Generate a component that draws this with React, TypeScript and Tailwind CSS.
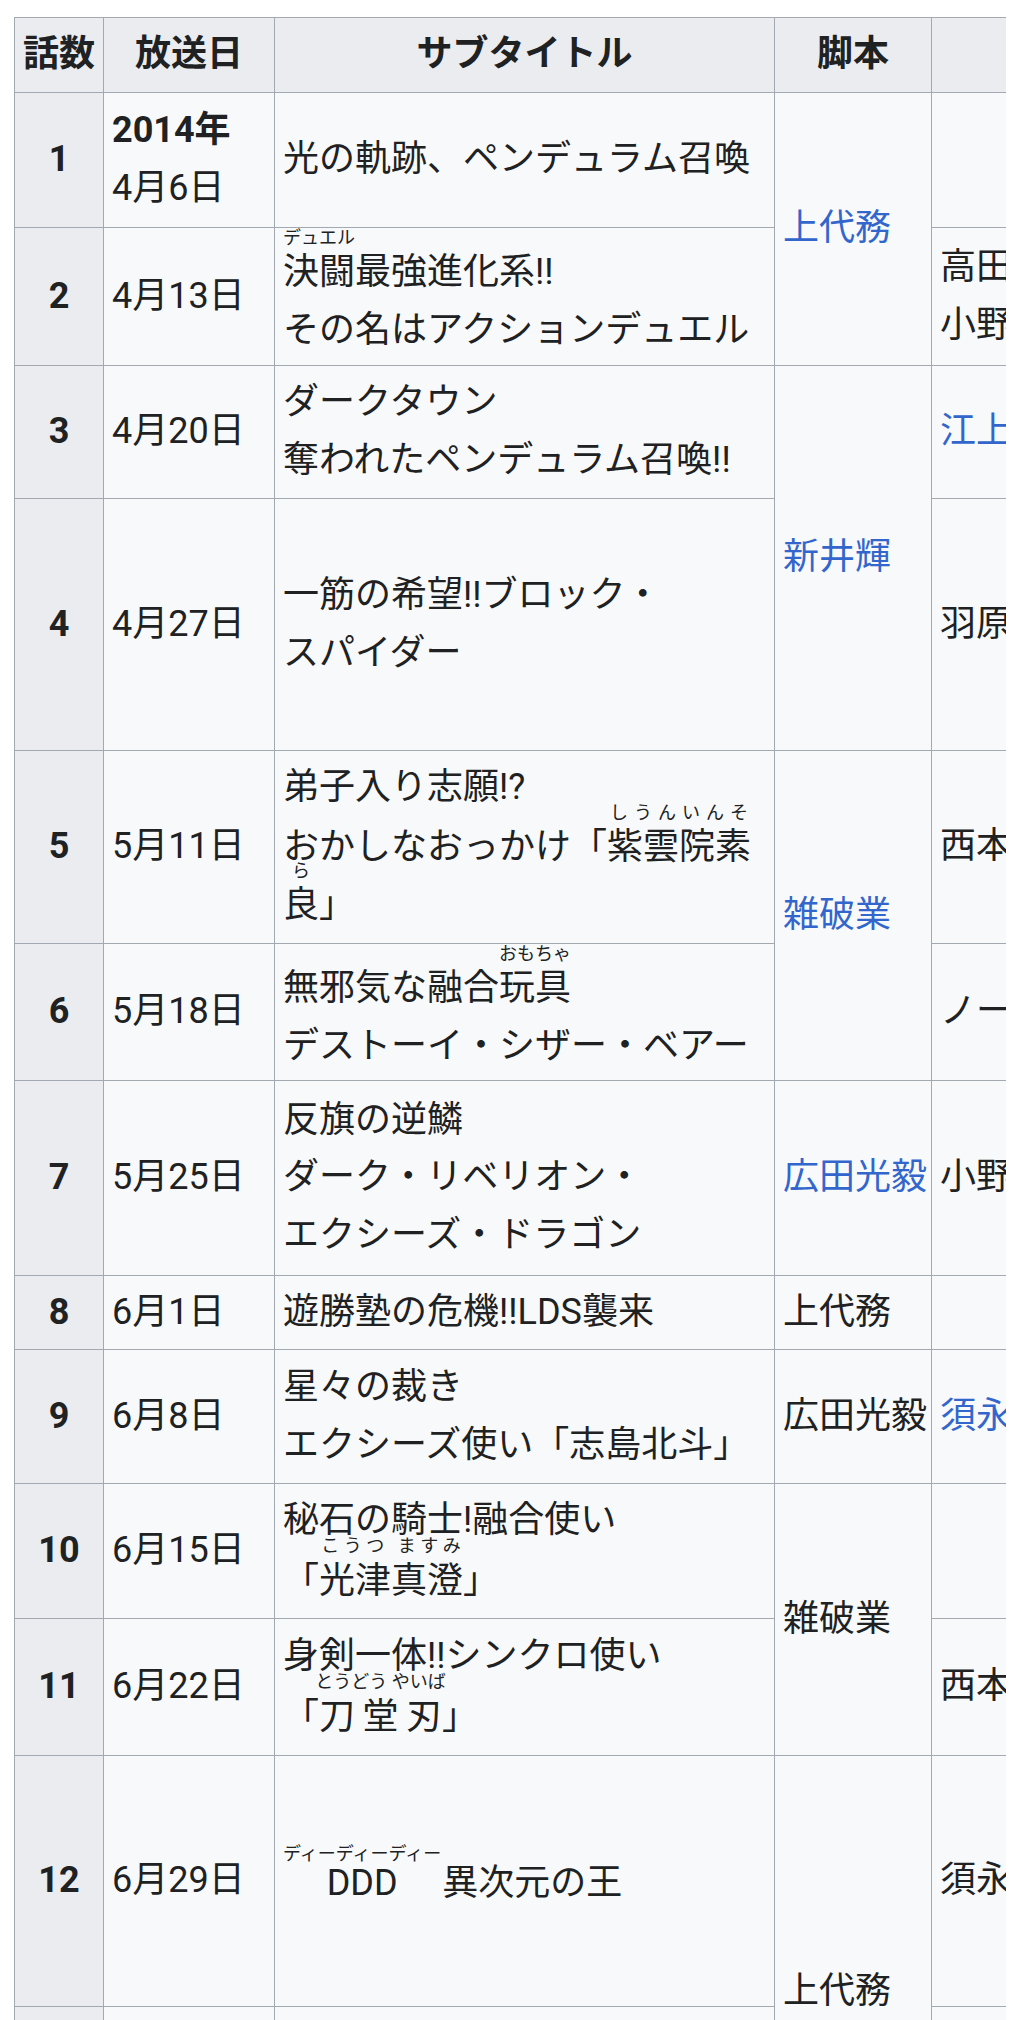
import type { ReactNode } from 'react';

type Row = {
  h: number;
  n: number;
  date: ReactNode;
  title: ReactNode;
  writer?: { text: string; link?: boolean; span?: number };
  staff: ReactNode;
};

// rt keeps a short line box so the ruby does not push the line open
function R({ b, t, className }: { b: string; t: string; className?: string }) {
  return (
    <ruby className={className}>
      {b}
      <rt className="text-[18px] leading-[8px] relative -top-[5px]">{t}</rt>
    </ruby>
  );
}

function A({ children }: { children: ReactNode }) {
  return <a className="text-[#3366cc]">{children}</a>;
}

const rows: Row[] = [
  {
    h: 135,
    n: 1,
    date: (
      <>
        <b>2014年</b>
        <br />
        4月6日
      </>
    ),
    title: '光の軌跡、ペンデュラム召喚',
    writer: { text: '上代務', link: true, span: 2 },
    staff: '',
  },
  {
    h: 138,
    n: 2,
    date: '4月13日',
    title: (
      <>
        <R b="決闘" t="デュエル" />
        最強進化系!!
        <br />
        その名はアクションデュエル
      </>
    ),
    staff: (
      <>
        高田昌宏
        <br />
        小野勝巳
      </>
    ),
  },
  {
    h: 133,
    n: 3,
    date: '4月20日',
    title: (
      <>
        ダークタウン
        <br />
        奪われたペンデュラム召喚!!
      </>
    ),
    writer: { text: '新井輝', link: true, span: 2 },
    staff: <A>江上潔</A>,
  },
  {
    h: 252,
    n: 4,
    date: '4月27日',
    title: (
      <>
        一筋の希望!!ブロック・
        <br />
        スパイダー
      </>
    ),
    staff: '羽原久美子',
  },
  {
    h: 193,
    n: 5,
    date: '5月11日',
    title: (
      <>
        弟子入り志願!?
        <br />
        おかしなおっかけ「
        <R b="紫雲院素" t="しうんいんそ" />
        <br />
        <R b="良" t="ら" />」
      </>
    ),
    writer: { text: '雑破業', link: true, span: 2 },
    staff: '西本由紀夫',
  },
  {
    h: 137,
    n: 6,
    date: '5月18日',
    title: (
      <>
        無邪気な融合
        <R b="玩具" t="おもちゃ" />
        <br />
        デストーイ・シザー・ベアー
      </>
    ),
    staff: 'ノーマン',
  },
  {
    h: 195,
    n: 7,
    date: '5月25日',
    title: (
      <>
        反旗の逆鱗
        <br />
        ダーク・リベリオン・
        <br />
        エクシーズ・ドラゴン
      </>
    ),
    writer: { text: '広田光毅', link: true },
    staff: '小野勝巳',
  },
  {
    h: 74,
    n: 8,
    date: '6月1日',
    title: '遊勝塾の危機!!LDS襲来',
    writer: { text: '上代務' },
    staff: '',
  },
  {
    h: 134,
    n: 9,
    date: '6月8日',
    title: (
      <>
        星々の裁き
        <br />
        エクシーズ使い「志島北斗」
      </>
    ),
    writer: { text: '広田光毅' },
    staff: <A>須永司</A>,
  },
  {
    h: 135,
    n: 10,
    date: '6月15日',
    title: (
      <>
        秘石の騎士!融合使い
        <br />「<R b="光津真澄" t="こうつ ますみ" />」
      </>
    ),
    writer: { text: '雑破業', span: 2 },
    staff: '',
  },
  {
    h: 137,
    n: 11,
    date: '6月22日',
    title: (
      <>
        身剣一体!!シンクロ使い
        <br />「<R b="刀堂刃" t="とうどう やいば" />」
      </>
    ),
    staff: '西本由紀夫',
  },
  {
    h: 251,
    n: 12,
    date: '6月29日',
    title: (
      <>
        <R b="DDD" t="ディーディーディー" className="mr-[10px]" />
        異次元の王
      </>
    ),
    writer: { text: '上代務', span: 2 },
    staff: '須永司',
  },
  {
    h: 222,
    n: 13,
    date: '7月6日',
    title: 'エンタメデュエルの真髄',
    staff: '江上潔',
  },
];

const cell = 'border-r border-b border-[#a2a9b1] px-[8px] align-middle';

export default function App() {
  return (
    <div className="w-[1035px] h-[2020px] overflow-hidden bg-white pt-[17px] pl-[14px] font-[Roboto,'Noto_Sans_CJK_JP',sans-serif] text-[36px] leading-[1.6] text-[#202122]">
      <div className="w-[992px] overflow-hidden">
        <table className="table-fixed border-separate border-spacing-0 border-l border-t border-[#a2a9b1] w-[1318px]">
          <colgroup>
            <col className="w-[89px]" />
            <col className="w-[171px]" />
            <col className="w-[500px]" />
            <col className="w-[157px]" />
            <col className="w-[400px]" />
          </colgroup>
          <thead>
            <tr className="h-[75px]">
              <th className={`${cell} bg-[#eaecf0] font-bold text-center whitespace-nowrap`}>話数</th>
              <th className={`${cell} bg-[#eaecf0] font-bold text-center whitespace-nowrap`}>放送日</th>
              <th className={`${cell} bg-[#eaecf0] font-bold text-center`}>サブタイトル</th>
              <th className={`${cell} bg-[#eaecf0] font-bold text-center`}>脚本</th>
              <th className={`${cell} bg-[#eaecf0] font-bold text-center whitespace-nowrap`}>絵コンテ</th>
            </tr>
          </thead>
          <tbody>
            {rows.map((r) => (
              <tr key={r.n} style={{ height: r.h }}>
                <th className={`${cell} bg-[#eaecf0] font-bold text-center`}>{r.n}</th>
                <td className={`${cell} bg-[#f8f9fa] whitespace-nowrap`}>{r.date}</td>
                <td className={`${cell} bg-[#f8f9fa]`}>{r.title}</td>
                {r.writer && (
                  <td rowSpan={r.writer.span ?? 1} className={`${cell} bg-[#f8f9fa] whitespace-nowrap`}>
                    {r.writer.link ? <A>{r.writer.text}</A> : r.writer.text}
                  </td>
                )}
                <td className={`${cell} bg-[#f8f9fa] whitespace-nowrap`}>{r.staff}</td>
              </tr>
            ))}
          </tbody>
        </table>
      </div>
    </div>
  );
}
